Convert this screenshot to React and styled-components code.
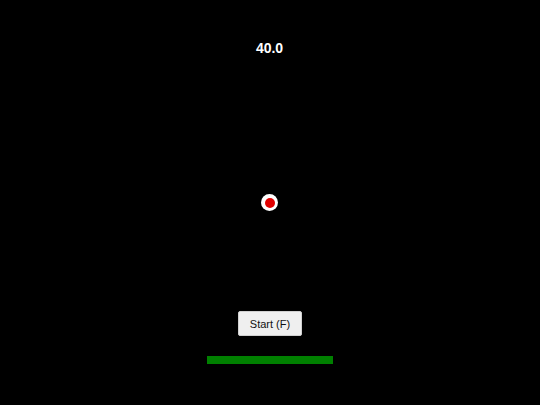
import React from 'react'
import { styled, createGlobalStyle } from 'styled-components'

const GlobalStyle = createGlobalStyle`
   html, body {
      margin: 0;
      padding: 0;
      background: #000;
   }
   body {
      font-family: "Liberation Sans", Arial, sans-serif;
   }
`

function App() {
   const score = 40
   const progress = 1

   return (
      <Page>
         <GlobalStyle />
         <Score>{score.toFixed(1)}</Score>
         <Target>
            <Dot />
         </Target>
         <Spacer />
         <StartButton type="button">Start (F)</StartButton>
         <Track>
            <Fill style={{ width: `${progress * 100}%` }} />
         </Track>
      </Page>
   )
}

export default App

const Page = styled.div`
   position: relative;
   height: 100vh;
   display: flex;
   flex-direction: column;
   align-items: center;
   background: #000;
   color: #fff;
`

const Score = styled.div`
   margin-top: 40px;
   font-size: 14px;
   line-height: 16px;
   font-weight: 700;
   transform: translateX(-0.5px);
`

// the target sits on the playfield at its own spot
const Target = styled.div`
   position: absolute;
   left: 261px;
   top: 194px;
   width: 17px;
   height: 17px;
   border-radius: 50%;
   background: #fff;
   display: flex;
   align-items: center;
   justify-content: center;
`

const Dot = styled.div`
   width: 10px;
   height: 10px;
   border-radius: 50%;
   background: #e00000;
`

const Spacer = styled.div`
   flex: 1;
`

const StartButton = styled.button`
   width: 64px;
   height: 25px;
   padding: 0;
   margin: 0 0 20px 0;
   font-family: "Liberation Sans", Arial, sans-serif;
   font-size: 11px;
   color: #111;
   background: #efefef;
   border: 1px solid #d0d0d0;
   border-radius: 2px;
   transform: translateX(0px);
`

const Track = styled.div`
   width: 126px;
   height: 8px;
   margin-bottom: 41px;
   margin-right: 0;
`

const Fill = styled.div`
   height: 100%;
   background: #008000;
`
